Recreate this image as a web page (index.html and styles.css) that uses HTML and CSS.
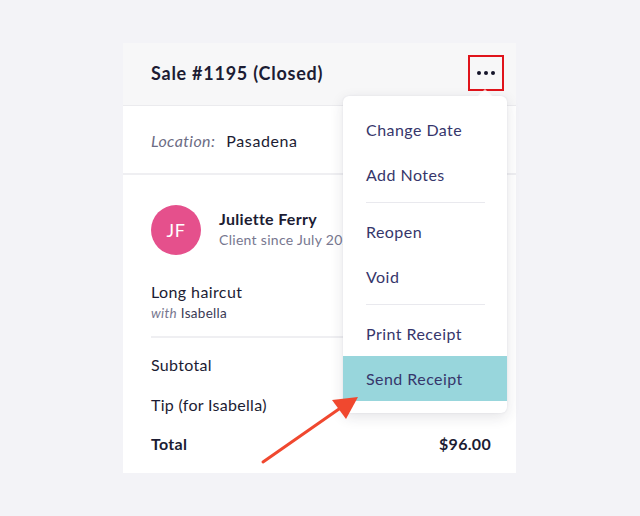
FILE: index.html
```html
<!DOCTYPE html>
<html>
<head>
<meta charset="utf-8">
<link rel="stylesheet" href="styles.css">
</head>
<body>
<div class="card">
  <div class="header">
    <div class="title">Sale #1195 (Closed)</div>
    <button class="more" aria-label="More">
      <span class="dot"></span><span class="dot"></span><span class="dot"></span>
    </button>
  </div>
  <div class="location">
    <span class="label">Location:</span>
    <span class="place">Pasadena</span>
  </div>
  <div class="body">
    <div class="client">
      <div class="avatar">JF</div>
      <div class="client-info">
        <div class="name">Juliette Ferry</div>
        <div class="since">Client since July 2022</div>
      </div>
    </div>
    <div class="service">
      <div class="service-name">Long haircut</div>
      <div class="service-with"><em>with</em> Isabella</div>
    </div>
    <div class="totals">
      <div class="row"><span>Subtotal</span><span>$80.00</span></div>
      <div class="row"><span>Tip (for Isabella)</span><span>$16.00</span></div>
      <div class="row total"><span>Total</span><span>$96.00</span></div>
    </div>
  </div>

  <div class="menu">
    <div class="item">Change Date</div>
    <div class="item">Add Notes</div>
    <div class="sep"></div>
    <div class="item">Reopen</div>
    <div class="item">Void</div>
    <div class="sep"></div>
    <div class="item">Print Receipt</div>
    <div class="item active">Send Receipt</div>
  </div>

  <svg class="arrow" width="110" height="80" viewBox="0 0 110 80">
    <line x1="8" y1="74" x2="84" y2="21" stroke="#f0482f" stroke-width="3" stroke-linecap="round"/>
    <polygon points="103,9 77,12 91,31" fill="#f0482f"/>
  </svg>
</div>
</body>
</html>
```
FILE: styles.css
```css
* { box-sizing: border-box; }
html, body { margin: 0; padding: 0; }
body {
  background: #f3f3f7;
  font-family: "Lato", "Open Sans", sans-serif;
  color: #1c1c33;
  width: 640px;
  height: 516px;
  overflow: hidden;
}
.card {
  position: relative;
  width: 393px;
  height: 430px;
  margin: 43px 0 0 123px;
  background: #fff;
  display: flex;
  flex-direction: column;
}
.header {
  height: 63px;
  background: #f7f7f8;
  border-bottom: 1px solid #ebebee;
  display: flex;
  align-items: center;
  justify-content: space-between;
  padding: 0 12px 0 28px;
}
.title {
  font-size: 18px;
  font-weight: 700;
  letter-spacing: 0.75px;
  margin-top: -3px;
}
.more {
  width: 36px;
  height: 36px;
  border: 2px solid #e0141b;
  background: transparent;
  display: flex;
  align-items: center;
  justify-content: center;
  gap: 3px;
  padding: 0;
  margin-top: -2px;
}
.dot {
  width: 4px;
  height: 4px;
  border-radius: 50%;
  background: #15152a;
}
.location {
  height: 69px;
  border-bottom: 2px solid #efeff2;
  display: flex;
  align-items: center;
  gap: 11px;
  padding: 2px 28px 0;
  font-size: 16px;
}
.label {
  font-style: italic;
  color: #6c6c84;
  letter-spacing: 0.4px;
}
.place { letter-spacing: 0.6px; }
.body {
  padding: 30px 25px 0 28px;
}
.client {
  display: flex;
  align-items: center;
  gap: 18px;
  height: 50px;
}
.avatar {
  width: 50px;
  height: 50px;
  border-radius: 50%;
  background: #e5508c;
  color: #fff;
  font-size: 18px;
  display: flex;
  align-items: center;
  justify-content: center;
  letter-spacing: 0.5px;
}
.client-info { display: flex; flex-direction: column; gap: 3px; margin-top: -4px; white-space: nowrap; }
.name { font-size: 16px; font-weight: 700; letter-spacing: 0.3px; }
.since { font-size: 14px; color: #77778f; letter-spacing: 0.3px; }
.service {
  margin-top: 27px;
  padding-bottom: 15px;
  border-bottom: 2px solid #efeff2;
}
.service-name { font-size: 16px; letter-spacing: 0.4px; line-height: 20px; }
.service-with { font-size: 13.5px; color: #3a3a55; letter-spacing: 0.3px; margin-top: 3px; }
.service-with em { color: #77778f; }
.totals { padding-top: 6px; }
.row {
  display: flex;
  justify-content: space-between;
  font-size: 16px;
  height: 40px;
  align-items: center;
  letter-spacing: 0.3px;
}
.row.total { font-weight: 700; height: 38px; }
.menu {
  position: absolute;
  left: 220px;
  top: 53px;
  width: 164px;
  background: #fff;
  border-radius: 6px;
  box-shadow: 0 4px 14px rgba(30, 30, 60, 0.12), 0 0 2px rgba(30,30,60,0.08);
  padding: 11px 0 12px;
  color: #36366b;
}
.menu::before {
  content: "";
  position: absolute;
  top: -5px;
  right: 17px;
  width: 10px;
  height: 10px;
  background: #fff;
  transform: rotate(45deg);
  opacity: 0.7;
}
.item {
  height: 45px;
  display: flex;
  align-items: center;
  padding-left: 23px;
  font-size: 16px;
  letter-spacing: 0.45px;
  position: relative;
}
.item.active { background: #98d6dc; }
.sep {
  height: 1px;
  background: #e9e9ee;
  margin: 5px 22px 6px 23px;
}
.arrow {
  position: absolute;
  left: 132px;
  top: 345px;
}
```
